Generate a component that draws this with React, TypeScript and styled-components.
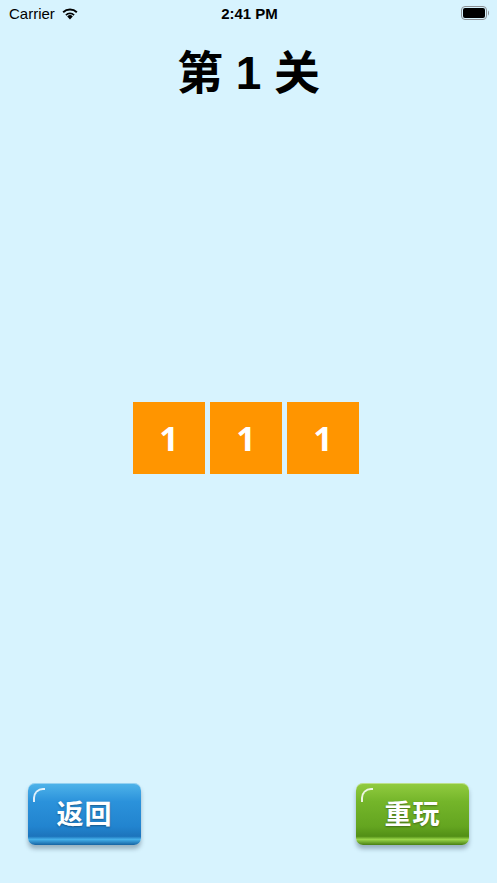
import React from "react";
import styled, { createGlobalStyle } from "styled-components";

const GlobalStyle = createGlobalStyle`
  html, body {
    margin: 0;
    padding: 0;
    background: #d7f3fe;
  }
  body {
    font-family: "Noto Sans", "Noto Sans CJK SC", sans-serif;
  }
`;

const Screen = styled.div`
  width: 497px;
  height: 883px;
  display: flex;
  flex-direction: column;
  background: #d7f3fe;
  overflow: hidden;
`;

const StatusBar = styled.div`
  height: 26px;
  display: grid;
  grid-template-columns: 1fr auto 1fr;
  align-items: center;
  padding: 0 7px 0 9px;
  font-family: "Liberation Sans", Arial, sans-serif;
  font-size: 15px;
  color: #000;
`;

const Carrier = styled.div`
  display: flex;
  align-items: center;
  gap: 6px;
`;

const Time = styled.div`
  font-weight: bold;
  font-size: 15px;
`;

const Battery = styled.div`
  justify-self: end;
  display: flex;
  align-items: center;
`;

const Title = styled.h1`
  margin: 17px 0 0;
  text-align: center;
  font-family: "Liberation Sans", "Noto Sans CJK SC", sans-serif;
  font-weight: 700;
  font-size: 46px;
  line-height: 60px;
  color: #000;
`;

const Board = styled.div`
  flex: 1;
  display: flex;
  align-items: center;
  justify-content: center;
  padding-bottom: 10px;
`;

const Row = styled.div`
  display: flex;
  gap: 5px;
  margin-left: -5px;
`;

const Tile = styled.div`
  width: 72px;
  height: 72px;
  background: #ff9500;
  color: #fff;
  display: flex;
  align-items: center;
  justify-content: center;
  font-family: "Open Sans", "Noto Sans", sans-serif;
  font-weight: 700;
  font-size: 34px;
`;

const Footer = styled.div`
  display: flex;
  justify-content: space-between;
  padding: 0 28px 38px 28px;
`;

const GameButton = styled.button<{ $tone: "blue" | "green" }>`
  position: relative;
  width: 113px;
  height: 62px;
  border: none;
  border-radius: 7px;
  padding: 0 0 4px;
  cursor: pointer;
  color: #fff;
  font-family: "Noto Sans CJK SC", sans-serif;
  font-weight: 700;
  font-size: 27px;
  letter-spacing: 1px;
  text-shadow: 0 1px 2px rgba(0, 0, 0, 0.35);
  background: ${(p) =>
    p.$tone === "blue"
      ? "linear-gradient(180deg, #4fb4ea 0%, #2b92db 30%, #2284cf 70%, #1c74bc 86%, #45b0ea 91%, #1663a2 100%)"
      : "linear-gradient(180deg, #92cc40 0%, #74b52a 30%, #64a520 70%, #528f16 86%, #9ad64a 91%, #487f12 100%)"};
  box-shadow: 0 4px 4px rgba(40, 60, 80, 0.35),
    inset 0 1px 0 rgba(255, 255, 255, 0.4);
`;

const Gloss = styled.span`
  position: absolute;
  left: 5px;
  top: 5px;
  width: 10px;
  height: 12px;
  border-left: 2px solid rgba(255, 255, 255, 0.85);
  border-top: 2px solid rgba(255, 255, 255, 0.85);
  border-top-left-radius: 10px;
`;

const Label = styled.span`
  position: relative;
`;

function Wifi() {
  return (
    <svg width="18" height="13" viewBox="0 0 18 13">
      <path d="M9 12.5 L6.2 9.4 A4 4 0 0 1 11.8 9.4 Z" fill="#000" />
      <path d="M4.3 7.4 A6.8 6.8 0 0 1 13.7 7.4 L12.5 8.7 A5 5 0 0 0 5.5 8.7 Z" fill="#000" />
      <path d="M1.5 4.5 A10.8 10.8 0 0 1 16.5 4.5 L15.2 5.9 A9 9 0 0 0 2.8 5.9 Z" fill="#000" />
    </svg>
  );
}

function BatteryIcon() {
  return (
    <svg width="29" height="14" viewBox="0 0 29 14">
      <rect x="0.5" y="0.5" width="25" height="13" rx="3.5" fill="none" stroke="#8a8f94" strokeWidth="1" />
      <rect x="2" y="2" width="22" height="10" rx="2" fill="#000" />
      <path d="M27 4.5 C28.3 5 28.3 9 27 9.5 Z" fill="#8a8f94" />
    </svg>
  );
}

const tiles = [1, 1, 1];

export default function App() {
  return (
    <>
      <GlobalStyle />
      <Screen>
        <StatusBar>
          <Carrier>
            Carrier
            <Wifi />
          </Carrier>
          <Time>2:41 PM</Time>
          <Battery>
            <BatteryIcon />
          </Battery>
        </StatusBar>
        <Title>第 1 关</Title>
        <Board>
          <Row>
            {tiles.map((n, i) => (
              <Tile key={i}>{n}</Tile>
            ))}
          </Row>
        </Board>
        <Footer>
          <GameButton $tone="blue">
            <Gloss />
            <Label>返回</Label>
          </GameButton>
          <GameButton $tone="green">
            <Gloss />
            <Label>重玩</Label>
          </GameButton>
        </Footer>
      </Screen>
    </>
  );
}
